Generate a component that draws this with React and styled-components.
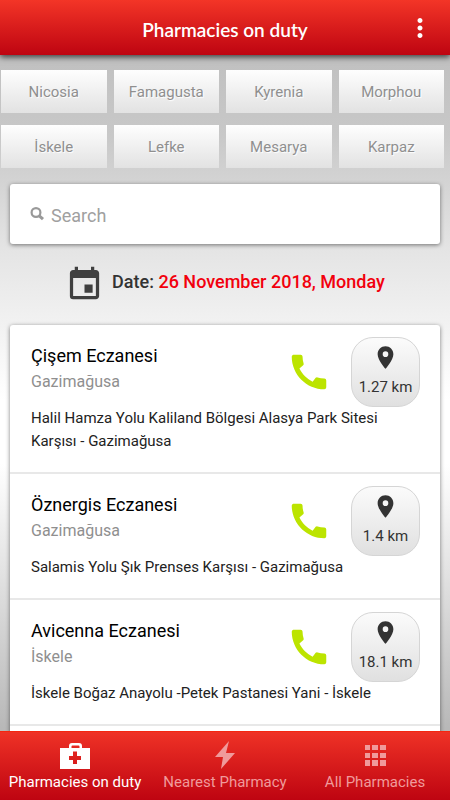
import React from "react";
import styled, { createGlobalStyle } from "styled-components";
import { MdCall, MdEvent, MdMoreVert, MdPlace } from "react-icons/md";

const cities = [
  "Nicosia",
  "Famagusta",
  "Kyrenia",
  "Morphou",
  "İskele",
  "Lefke",
  "Mesarya",
  "Karpaz",
];

const pharmacies = [
  {
    name: "Çişem Eczanesi",
    city: "Gazimağusa",
    address: "Halil Hamza Yolu Kaliland Bölgesi Alasya Park Sitesi Karşısı - Gazimağusa",
    distance: "1.27 km",
  },
  {
    name: "Öznergis Eczanesi",
    city: "Gazimağusa",
    address: "Salamis Yolu Şık Prenses Karşısı - Gazimağusa",
    distance: "1.4 km",
  },
  {
    name: "Avicenna Eczanesi",
    city: "İskele",
    address: "İskele Boğaz Anayolu -Petek Pastanesi Yani - İskele",
    distance: "18.1 km",
  },
];

const SearchIcon = () => (
  <svg width="14" height="14" viewBox="0 0 14 14" aria-hidden="true">
    <circle cx="6" cy="5.5" r="4.4" fill="none" stroke="#999" strokeWidth="2.2" />
    <path d="M9 8.6 13 12.2" stroke="#999" strokeWidth="3" />
  </svg>
);

const MedkitIcon = () => (
  <svg width="30" height="28" viewBox="0 0 30 28" aria-hidden="true">
    <path
      fill="currentColor"
      fillRule="evenodd"
      d="M0 7H9V5Q9 2 12 2H19Q22 2 22 5V7H30V28H0ZM11.5 7H19.5V5.5Q19.5 4.5 18.5 4.5H12.5Q11.5 4.5 11.5 5.5ZM13 10.5V15H9V19H13V23H17V19H21V15H17V10.5Z"
    />
  </svg>
);

const FlashIcon = () => (
  <svg width="30" height="28" viewBox="0 0 30 28" aria-hidden="true">
    <path fill="currentColor" d="M19 0 5 16H13L11 28 25 12H16Z" />
  </svg>
);

const GridIcon = () => (
  <svg width="30" height="28" viewBox="0 0 30 28" aria-hidden="true">
    <path
      fill="currentColor"
      d="M5 4h5v5H5zM12 4h6v5H12zM20 4h6v5H20zM5 12h5v5H5zM12 12h6v5H12zM20 12h6v5H20zM5 19h5v6H5zM12 19h6v6H12zM20 19h6v6H20z"
    />
  </svg>
);

const tabs = [
  { label: "Pharmacies on duty", icon: <MedkitIcon />, active: true },
  { label: "Nearest Pharmacy", icon: <FlashIcon /> },
  { label: "All Pharmacies", icon: <GridIcon /> },
];

const App = () => {
  return (
    <Page>
      <GlobalStyle />
      <Header>
        <Title>Pharmacies on duty</Title>
        <MenuButton type="button" aria-label="Menu">
          <MdMoreVert size={30} />
        </MenuButton>
      </Header>
      <Content>
        <CityGrid>
          {cities.map((city) => (
            <CityButton type="button" key={city}>
              {city}
            </CityButton>
          ))}
        </CityGrid>
        <SearchBox>
          <SearchIcon />
          <SearchInput type="search" placeholder="Search" aria-label="Search" />
        </SearchBox>
        <DateRow>
          <MdEvent size={39} />
          <DateText>
            Date: <DateValue>26 November 2018, Monday</DateValue>
          </DateText>
        </DateRow>
        <List>
          {pharmacies.map((pharmacy) => (
            <Item key={pharmacy.name}>
              <ItemTop>
                <ItemInfo>
                  <Name>{pharmacy.name}</Name>
                  <City>{pharmacy.city}</City>
                </ItemInfo>
                <CallButton type="button" aria-label={`Call ${pharmacy.name}`}>
                  <MdCall size={46} />
                </CallButton>
                <DistanceButton type="button">
                  <MdPlace size={27} />
                  {pharmacy.distance}
                </DistanceButton>
              </ItemTop>
              <Address>{pharmacy.address}</Address>
            </Item>
          ))}
          <Item />
        </List>
      </Content>
      <TabBar>
        {tabs.map((tab) => (
          <Tab type="button" key={tab.label} $active={tab.active}>
            {tab.icon}
            {tab.label}
          </Tab>
        ))}
      </TabBar>
    </Page>
  );
};

const GlobalStyle = createGlobalStyle`
  * {
    box-sizing: border-box;
  }

  body {
    margin: 0;
    font-family: Roboto, "Noto Sans", sans-serif;
  }

  button,
  input {
    font-family: inherit;
  }
`;

const Page = styled.div`
  height: 100vh;
  display: flex;
  flex-direction: column;
  background: linear-gradient(
    #bbb 0%,
    #c8c8c8 17%,
    #e4e4e4 31%,
    #fff 50%,
    #fff 58%,
    #ddd 74%,
    #b8b8b8 91%
  );
`;

const Header = styled.header`
  flex: none;
  height: 55px;
  display: grid;
  grid-template-columns: 1fr auto 1fr;
  align-items: center;
  padding: 4px 15px 0;
  color: white;
  background: linear-gradient(#f33527, #be0411);
  box-shadow: 0 2px 6px rgba(0, 0, 0, 0.7);
  z-index: 1;
`;

const Title = styled.h1`
  grid-column: 2;
  margin: 0;
  font-family: Lato, sans-serif;
  font-size: 19px;
  font-weight: 600;
  line-height: 24px;
`;

const MenuButton = styled.button`
  justify-self: end;
  display: flex;
  padding: 0 0 4px;
  border: 0;
  background: none;
  color: inherit;
`;

const Content = styled.main`
  flex: 1;
  min-height: 0;
  overflow: hidden;
`;

const CityGrid = styled.div`
  display: grid;
  grid-template-columns: repeat(4, 1fr);
  gap: 12px 7px;
  padding: 15px 6px 16px 1px;
`;

const CityButton = styled.button`
  height: 43px;
  padding: 0;
  border: 0;
  background: linear-gradient(#fefefe, #e2e2e2);
  color: #8f8f8f;
  font-size: 15px;
  text-shadow: 1px 1px 1px white;
`;

const SearchBox = styled.label`
  display: flex;
  align-items: center;
  gap: 7px;
  height: 60px;
  margin: 0 10px;
  padding: 0 20px;
  border-radius: 3px;
  background: white;
  box-shadow: 0 1px 4px rgba(0, 0, 0, 0.5);
`;

const SearchInput = styled.input`
  flex: 1;
  min-width: 0;
  padding: 2px 0 0;
  border: 0;
  outline: 0;
  background: none;
  font-size: 18px;

  &::placeholder {
    color: #a0a0a0;
  }
`;

const DateRow = styled.div`
  display: flex;
  justify-content: center;
  align-items: center;
  gap: 8px;
  height: 81px;
  padding-bottom: 1px;
  color: #404040;
`;

const DateText = styled.div`
  padding-bottom: 6px;
  color: #333;
  font-size: 18px;
  font-weight: 500;
`;

const DateValue = styled.span`
  color: #f2000d;
`;

const List = styled.ul`
  margin: 0 10px;
  padding: 0;
  list-style: none;
  border-radius: 3px;
  background: white;
  box-shadow: 0 1px 4px rgba(0, 0, 0, 0.5);
`;

const Item = styled.li`
  padding: 12px 20px 19px 21px;

  & + & {
    border-top: 2px solid #e8e8e8;
  }
`;

const ItemTop = styled.div`
  display: flex;
  align-items: center;
`;

const ItemInfo = styled.div`
  flex: 1;
  padding-bottom: 6px;
`;

const Name = styled.h2`
  margin: 0;
  color: #000;
  font-size: 18px;
  font-weight: 400;
  line-height: 26px;
`;

const City = styled.p`
  margin: 0;
  color: #8f8f8f;
  font-size: 16px;
  line-height: 26px;
`;

const CallButton = styled.button`
  display: flex;
  margin-right: 19px;
  padding: 0;
  border: 0;
  background: none;
  color: #bce400;
`;

const DistanceButton = styled.button`
  display: flex;
  flex-direction: column;
  align-items: center;
  gap: 7px;
  width: 69px;
  height: 70px;
  padding: 6px 0 0;
  border: 1px solid #d5d5d5;
  border-radius: 22px;
  background: linear-gradient(#fbfbfb, #e0e0e0);
  color: #333;
  font-size: 15px;
  line-height: 18px;
  white-space: nowrap;
`;

const Address = styled.p`
  margin: 0;
  color: #222;
  font-size: 15px;
  line-height: 23px;
`;

const TabBar = styled.nav`
  flex: none;
  display: grid;
  grid-template-columns: repeat(3, 1fr);
  height: 69px;
  border-top: 1px solid #f42610;
  background: linear-gradient(#ef3226, #be0411);
  z-index: 1;
`;

const Tab = styled.button`
  display: flex;
  flex-direction: column;
  align-items: center;
  gap: 4px;
  padding: 9px 0 0;
  border: 0;
  background: none;
  color: ${(props) => (props.$active ? "white" : "#f09a9b")};
  font-size: 15px;
  line-height: 18px;
  white-space: nowrap;
`;

export default App;
